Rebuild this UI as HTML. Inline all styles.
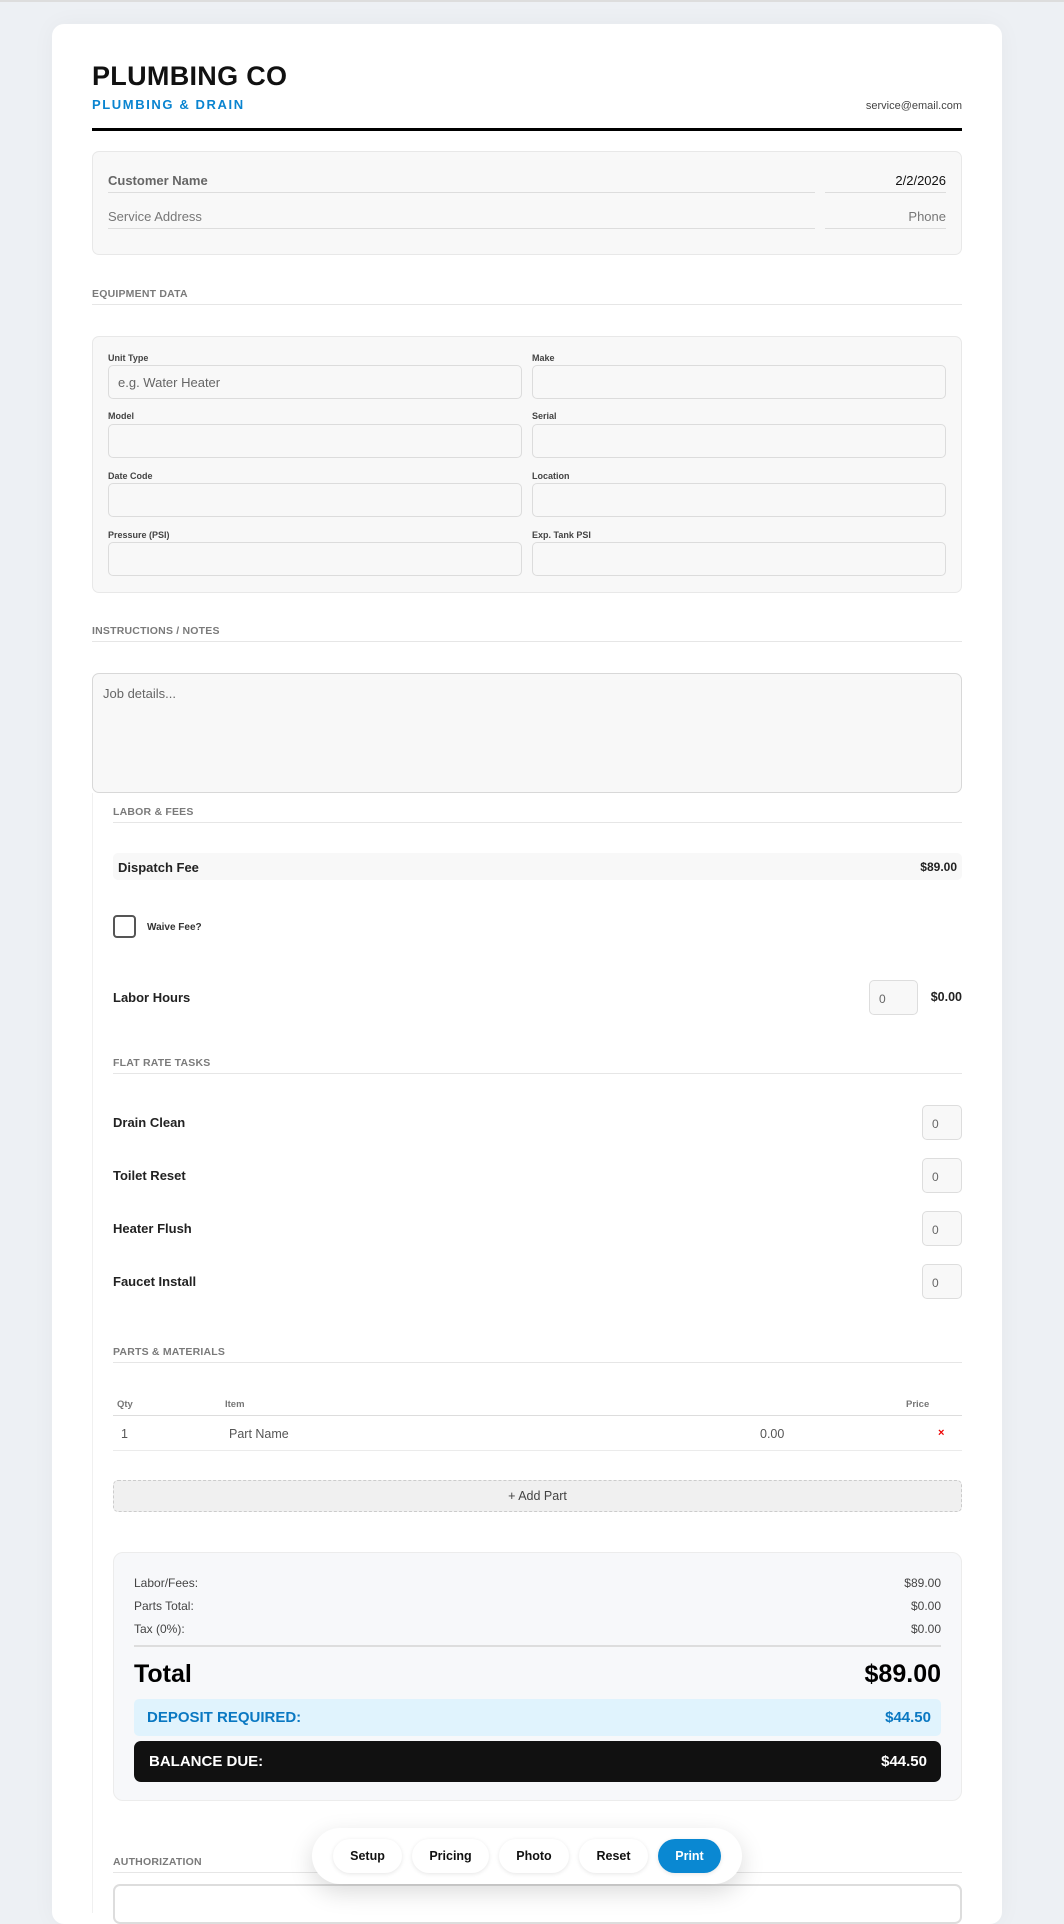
<!DOCTYPE html>
<html><head><meta charset="utf-8"><style>
*{box-sizing:border-box;margin:0;padding:0}
body{width:1064px;height:1908px;background:#edf0f4;font-family:"Liberation Sans",sans-serif;position:relative;overflow:hidden;color:#222}
.a{position:absolute}
.card{left:52px;top:24px;width:950px;height:1900px;background:#fff;border-radius:12px;box-shadow:0 0 24px rgba(0,0,0,.04)}
.sec{font-size:10.5px;font-weight:bold;color:#7a7a7a;letter-spacing:.2px}
.ln{height:1px;background:#e6e6e6}
.box{background:#f8f8f8;border:1px solid #e8e8e8;border-radius:7px}
.lab{font-size:9px;font-weight:bold;color:#444}
.inp{background:#f8f8f8;border:1px solid #dcdcdc;border-radius:5px;height:34px}
.row{font-size:13px;font-weight:bold;color:#222}
.q{width:40px;height:35px;border:1px solid #ddd;border-radius:5px;background:#f8f8f8;font-size:12px;color:#666;padding:11px 0 0 9px}
.g{font-size:12px;color:#444}
.btn{top:1839px;height:34px;border-radius:17px;background:#fff;box-shadow:0 1px 4px rgba(0,0,0,.1);font-size:12.5px;font-weight:bold;text-align:center;line-height:34px;color:#111}
</style></head><body>
<div class="a" style="left:0;top:0;width:1064px;height:2px;background:#ddd"></div>
<div class="a card"></div>
<div class="a" style="left:92px;top:61px;font-size:27px;font-weight:bold;color:#111;letter-spacing:.3px">PLUMBING CO</div>
<div class="a" style="left:92px;top:97px;font-size:13px;font-weight:bold;color:#0a84d0;letter-spacing:1.6px">PLUMBING &amp; DRAIN</div>
<div class="a" style="right:102px;top:100px;font-size:11px;color:#444">service@email.com</div>
<div class="a" style="left:92px;top:128px;width:870px;height:3px;background:#000"></div>

<div class="a box" style="left:92px;top:151px;width:870px;height:104px"></div>
<div class="a" style="left:108px;top:173px;font-size:13px;font-weight:bold;color:#666">Customer Name</div>
<div class="a ln" style="left:108px;top:192px;width:707px;background:#ddd"></div>
<div class="a" style="right:118px;top:173px;font-size:13px;color:#111">2/2/2026</div>
<div class="a ln" style="left:825px;top:192px;width:121px;background:#ddd"></div>
<div class="a" style="left:108px;top:209px;font-size:13px;color:#777">Service Address</div>
<div class="a ln" style="left:108px;top:228px;width:707px;background:#ddd"></div>
<div class="a" style="right:118px;top:209px;font-size:13px;color:#777">Phone</div>
<div class="a ln" style="left:825px;top:228px;width:121px;background:#ddd"></div>

<div class="a sec" style="left:92px;top:288px">EQUIPMENT DATA</div>
<div class="a ln" style="left:92px;top:304px;width:870px"></div>
<div class="a box" style="left:92px;top:336px;width:870px;height:257px"></div>
<div class="a lab" style="left:108px;top:353px">Unit Type</div><div class="a lab" style="left:532px;top:353px">Make</div>
<div class="a inp" style="left:108px;top:365px;width:414px;font-size:13px;color:#666;padding:9px 0 0 9px">e.g. Water Heater</div>
<div class="a inp" style="left:532px;top:365px;width:414px"></div>
<div class="a lab" style="left:108px;top:411px">Model</div><div class="a lab" style="left:532px;top:411px">Serial</div>
<div class="a inp" style="left:108px;top:424px;width:414px"></div><div class="a inp" style="left:532px;top:424px;width:414px"></div>
<div class="a lab" style="left:108px;top:471px">Date Code</div><div class="a lab" style="left:532px;top:471px">Location</div>
<div class="a inp" style="left:108px;top:483px;width:414px"></div><div class="a inp" style="left:532px;top:483px;width:414px"></div>
<div class="a lab" style="left:108px;top:530px">Pressure (PSI)</div><div class="a lab" style="left:532px;top:530px">Exp. Tank PSI</div>
<div class="a inp" style="left:108px;top:542px;width:414px"></div><div class="a inp" style="left:532px;top:542px;width:414px"></div>

<div class="a sec" style="left:92px;top:625px">INSTRUCTIONS / NOTES</div>
<div class="a ln" style="left:92px;top:641px;width:870px"></div>
<div class="a" style="left:92px;top:673px;width:870px;height:120px;background:#f8f8f8;border:1px solid #d8d8d8;border-radius:7px;font-size:13px;color:#666;padding:12px 10px">Job details...</div>

<div class="a" style="left:92px;top:793px;width:1px;height:1120px;background:#f0f0f0"></div>
<div class="a sec" style="left:113px;top:806px">LABOR &amp; FEES</div>
<div class="a ln" style="left:113px;top:822px;width:849px"></div>
<div class="a" style="left:113px;top:853px;width:849px;height:27px;background:#f8f8f8;border-radius:5px"></div>
<div class="a row" style="left:118px;top:860px">Dispatch Fee</div>
<div class="a row" style="right:107px;top:860px;font-size:12px">$89.00</div>
<div class="a" style="left:113px;top:915px;width:23px;height:23px;border:2px solid #555;border-radius:4px"></div>
<div class="a" style="left:147px;top:922px;font-size:10px;font-weight:bold;color:#333">Waive Fee?</div>
<div class="a row" style="left:113px;top:990px">Labor Hours</div>
<div class="a q" style="left:869px;top:980px;width:49px">0</div>
<div class="a row" style="right:102px;top:990px;font-size:12.5px">$0.00</div>

<div class="a sec" style="left:113px;top:1057px">FLAT RATE TASKS</div>
<div class="a ln" style="left:113px;top:1073px;width:849px"></div>
<div class="a row" style="left:113px;top:1115px">Drain Clean</div><div class="a q" style="left:922px;top:1105px">0</div>
<div class="a row" style="left:113px;top:1168px">Toilet Reset</div><div class="a q" style="left:922px;top:1158px">0</div>
<div class="a row" style="left:113px;top:1221px">Heater Flush</div><div class="a q" style="left:922px;top:1211px">0</div>
<div class="a row" style="left:113px;top:1274px">Faucet Install</div><div class="a q" style="left:922px;top:1264px">0</div>

<div class="a sec" style="left:113px;top:1346px">PARTS &amp; MATERIALS</div>
<div class="a ln" style="left:113px;top:1362px;width:849px"></div>
<div class="a" style="left:117px;top:1399px;font-size:9.5px;font-weight:bold;color:#777">Qty</div>
<div class="a" style="left:225px;top:1399px;font-size:9.5px;font-weight:bold;color:#777">Item</div>
<div class="a" style="left:906px;top:1399px;font-size:9.5px;font-weight:bold;color:#777">Price</div>
<div class="a ln" style="left:113px;top:1415px;width:849px;background:#ddd"></div>
<div class="a" style="left:121px;top:1427px;font-size:12.5px;color:#555">1</div>
<div class="a" style="left:229px;top:1427px;font-size:12.5px;color:#555">Part Name</div>
<div class="a" style="left:760px;top:1427px;font-size:12.5px;color:#555">0.00</div>
<div class="a" style="left:938px;top:1427px;font-size:11px;font-weight:bold;color:#e00">×</div>
<div class="a ln" style="left:113px;top:1450px;width:849px;background:#ebebeb"></div>
<div class="a" style="left:113px;top:1480px;width:849px;height:32px;background:#f0f0f0;border:1px dashed #ccc;border-radius:5px;text-align:center;line-height:30px;font-size:12.5px;color:#444">+ Add Part</div>

<div class="a" style="left:113px;top:1552px;width:849px;height:249px;background:#f7f8fa;border:1px solid #ececec;border-radius:10px"></div>
<div class="a g" style="left:134px;top:1576px">Labor/Fees:</div><div class="a g" style="right:123px;top:1576px">$89.00</div>
<div class="a g" style="left:134px;top:1599px">Parts Total:</div><div class="a g" style="right:123px;top:1599px">$0.00</div>
<div class="a g" style="left:134px;top:1622px">Tax (0%):</div><div class="a g" style="right:123px;top:1622px">$0.00</div>
<div class="a" style="left:134px;top:1645px;width:807px;height:2px;background:#ddd"></div>
<div class="a" style="left:134px;top:1660px;font-size:25px;font-weight:bold;color:#000">Total</div>
<div class="a" style="right:123px;top:1660px;font-size:25px;font-weight:bold;color:#000">$89.00</div>
<div class="a" style="left:134px;top:1699px;width:807px;height:37px;background:#e0f3fd;border-radius:5px"></div>
<div class="a" style="left:147px;top:1709px;font-size:15px;font-weight:bold;color:#0a78c2">DEPOSIT REQUIRED:</div>
<div class="a" style="right:133px;top:1709px;font-size:15px;font-weight:bold;color:#0a78c2">$44.50</div>
<div class="a" style="left:134px;top:1741px;width:807px;height:41px;background:#111;border-radius:7px"></div>
<div class="a" style="left:149px;top:1753px;font-size:15px;font-weight:bold;color:#fff">BALANCE DUE:</div>
<div class="a" style="right:137px;top:1753px;font-size:15px;font-weight:bold;color:#fff">$44.50</div>

<div class="a sec" style="left:113px;top:1856px">AUTHORIZATION</div>
<div class="a ln" style="left:113px;top:1872px;width:849px"></div>
<div class="a" style="left:113px;top:1884px;width:849px;height:40px;border:2px solid #ddd;border-radius:7px"></div>

<div class="a" style="left:312px;top:1828px;width:430px;height:56px;background:#fff;border-radius:28px;box-shadow:0 8px 24px rgba(0,0,0,.15)"></div>
<div class="a btn" style="left:333px;width:69px">Setup</div>
<div class="a btn" style="left:412px;width:77px">Pricing</div>
<div class="a btn" style="left:499px;width:70px">Photo</div>
<div class="a btn" style="left:579px;width:69px">Reset</div>
<div class="a btn" style="left:658px;width:63px;background:#0a88d2;color:#fff">Print</div>
</body></html>
